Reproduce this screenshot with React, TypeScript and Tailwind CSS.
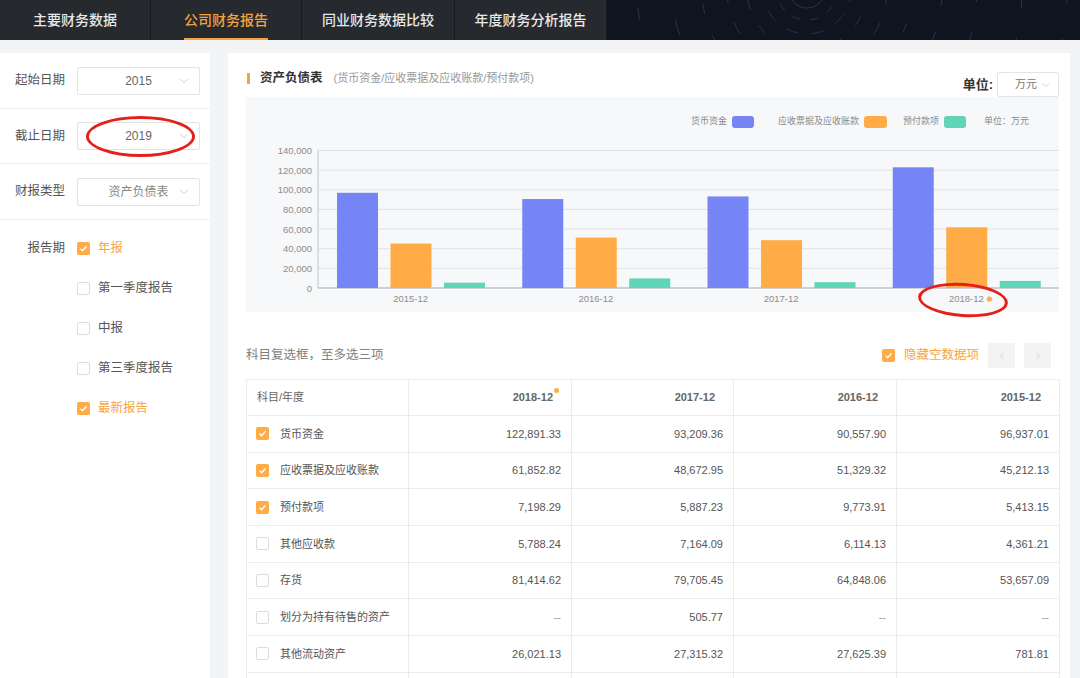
import { ChevronDown, ChevronLeft, ChevronRight } from "lucide-react";

const tabs = ["主要财务数据", "公司财务报告", "同业财务数据比较", "年度财务分析报告"];
const tabWidths = ["w-[151px]", "w-[151px]", "w-[153px]", "w-[152px]"];

const periods = [
  { label: "年报", checked: true },
  { label: "第一季度报告", checked: false },
  { label: "中报", checked: false },
  { label: "第三季度报告", checked: false },
  { label: "最新报告", checked: true },
];

const chartData = [
  { year: "2015-12", values: [96937, 45212, 5413] },
  { year: "2016-12", values: [90558, 51329, 9774] },
  { year: "2017-12", values: [93209, 48673, 5887] },
  { year: "2018-12", values: [122891, 61853, 7198] },
];

const barColors = ["#7585f6", "#ffab46", "#5fd4b6"];

const rows: [string, boolean, string, string, string, string][] = [
  ["货币资金", true, "122,891.33", "93,209.36", "90,557.90", "96,937.01"],
  ["应收票据及应收账款", true, "61,852.82", "48,672.95", "51,329.32", "45,212.13"],
  ["预付款项", true, "7,198.29", "5,887.23", "9,773.91", "5,413.15"],
  ["其他应收款", false, "5,788.24", "7,164.09", "6,114.13", "4,361.21"],
  ["存货", false, "81,414.62", "79,705.45", "64,848.06", "53,657.09"],
  ["划分为持有待售的资产", false, "--", "505.77", "--", "--"],
  ["其他流动资产", false, "26,021.13", "27,315.32", "27,625.39", "781.81"],
];

function Checkbox({ checked }: { checked: boolean }) {
  if (checked) {
    return (
      <span className="w-[13px] h-[13px] rounded-[2px] bg-[#ffab46] flex items-center justify-center shrink-0">
        <svg width="9" height="9" viewBox="0 0 9 9">
          <path d="M1.5 4.6 L3.6 6.7 L7.6 2.2" fill="none" stroke="#fff" strokeWidth="1.3" />
        </svg>
      </span>
    );
  }
  return <span className="w-[13px] h-[13px] rounded-[2px] border border-[#dcdcdc] bg-white shrink-0" />;
}

function Select({ value, light }: { value: string; light?: boolean }) {
  return (
    <div className="relative shrink-0 w-[123px] h-[28px] border border-[#e4e4e4] rounded-[2px] flex items-center justify-center">
      <span className={light ? "text-[12px] text-[#888]" : "text-[12px] text-[#666]"}>{value}</span>
      <ChevronDown size={14} strokeWidth={1} className="absolute right-[8px] text-[#aaa]" />
    </div>
  );
}

function Chart() {
  const top = 53.5;
  const bottom = 191;
  const left = 72;
  const right = 813;
  const catW = (right - left) / 4;
  const y = (v: number) => bottom - (v / 140000) * (bottom - top);
  const ticks = [140000, 120000, 100000, 80000, 60000, 40000, 20000, 0];

  return (
    <svg width="813" height="215" className="block">
      <g fontFamily="Liberation Sans, Noto Sans CJK SC, sans-serif" fontSize="9" fill="#8a8a8a">
        <text x="445" y="27">货币资金</text>
        <rect x="486" y="19" width="22" height="12" rx="3" fill={barColors[0]} />
        <text x="532" y="27">应收票据及应收账款</text>
        <rect x="618" y="19" width="23" height="12" rx="3" fill={barColors[1]} />
        <text x="657" y="27">预付款项</text>
        <rect x="698" y="19" width="22" height="12" rx="3" fill={barColors[2]} />
        <text x="738" y="27">单位：万元</text>
      </g>
      {ticks.map((t) => (
        <g key={t}>
          <line
            x1={left}
            x2={right}
            y1={y(t)}
            y2={y(t)}
            stroke={t === 0 ? "#a9a9ad" : "#e1e2e6"}
            strokeWidth="1"
          />
          <text
            x="66"
            y={y(t) + 3.5}
            textAnchor="end"
            fontFamily="Liberation Sans, sans-serif"
            fontSize="9.5"
            fill="#8d8d8d"
          >
            {t.toLocaleString("en-US")}
          </text>
        </g>
      ))}
      <line x1={left} x2={left} y1={top} y2={bottom} stroke="#c4c4c8" strokeWidth="1" />
      {chartData.map((d, i) => {
        const start = left + i * catW;
        return (
          <g key={d.year}>
            {d.values.map((v, j) => (
              <rect
                key={j}
                x={start + 19 + j * 53.5}
                y={y(v)}
                width="41"
                height={bottom - y(v)}
                fill={barColors[j]}
              />
            ))}
            <text
              x={start + catW / 2}
              y="205"
              textAnchor="middle"
              fontFamily="Liberation Sans, sans-serif"
              fontSize="9.5"
              fill="#8d8d8d"
            >
              {d.year}
            </text>
            {i === 3 && <circle cx={start + catW / 2 + 23} cy="202" r="2.6" fill="#ffab46" />}
          </g>
        );
      })}
    </svg>
  );
}

export default function App() {
  return (
    <div className="relative w-[1080px] h-[678px] overflow-hidden bg-[#f3f4f6] font-['Liberation_Sans','Noto_Sans_CJK_SC',sans-serif]">
      {/* Top nav */}
      <nav className="relative h-[40px] flex bg-[#0f1421] overflow-hidden">
        <svg className="absolute left-[607px] top-0" width="473" height="40">
          <g fill="none" stroke="#3a4a5c" strokeWidth="1" opacity="0.6">
            <circle cx="200" cy="-10" r="18" />
            <circle cx="200" cy="-10" r="30" strokeDasharray="8 10" />
            <circle cx="200" cy="-10" r="44" strokeDasharray="12 14" />
            <circle cx="200" cy="-10" r="60" strokeDasharray="10 18" />
            <circle cx="200" cy="-10" r="80" strokeDasharray="14 20" />
            <circle cx="200" cy="-10" r="105" strokeDasharray="10 24" />
            <circle cx="200" cy="-10" r="135" strokeDasharray="16 26" />
            <circle cx="200" cy="-10" r="170" strokeDasharray="12 30" />
            <circle cx="200" cy="-10" r="215" strokeDasharray="18 30" />
            <circle cx="200" cy="-10" r="260" strokeDasharray="14 34" />
          </g>
        </svg>
        {tabs.map((t, i) => (
          <div
            key={t}
            className={`relative ${tabWidths[i]} h-full flex items-center justify-center bg-[#26292e] border-r border-[#18191d]`}
          >
            <span
              className={
                i === 1
                  ? "relative h-full flex items-center text-[14px] font-medium text-[#f5a33d]"
                  : "text-[14px] font-medium text-[#e8e8e8]"
              }
            >
              {t}
              {i === 1 && <span className="absolute left-0 right-0 bottom-0 h-[2px] bg-[#f5a33d]" />}
            </span>
          </div>
        ))}
      </nav>

      <div className="flex gap-[18px] pt-[13px]">
        {/* Sidebar */}
        <aside className="w-[210px] h-[625px] bg-white flex flex-col">
          <div className="h-[56px] flex items-center pl-[15px] pr-[10px] border-b border-[#efefef]">
            <span className="w-[62px] shrink-0 text-[12.5px] text-[#555]">起始日期</span>
            <Select value="2015" />
          </div>
          <div className="h-[55px] flex items-center pl-[15px] pr-[10px] border-b border-[#efefef]">
            <span className="w-[62px] shrink-0 text-[12.5px] text-[#555]">截止日期</span>
            <Select value="2019" />
          </div>
          <div className="h-[56px] flex items-center pl-[15px] pr-[10px] border-b border-[#efefef]">
            <span className="w-[62px] shrink-0 text-[12.5px] text-[#555]">财报类型</span>
            <Select value="资产负债表" light />
          </div>
          <div className="pt-[8px] px-[15px] flex flex-col">
            {periods.map((p, i) => (
              <div key={p.label} className="h-[40px] flex items-center">
                <span className="w-[62px] shrink-0 pr-[12px] text-right text-[12.5px] text-[#555]">
                  {i === 0 ? "报告期" : ""}
                </span>
                <Checkbox checked={p.checked} />
                <span
                  className={
                    p.checked
                      ? "ml-[8px] text-[12.5px] text-[#f7a541]"
                      : "ml-[8px] text-[12.5px] text-[#555]"
                  }
                >
                  {p.label}
                </span>
              </div>
            ))}
          </div>
        </aside>

        {/* Main */}
        <main className="w-[842px] h-[625px] bg-white pl-[18px] pr-[11px] pt-[19px] overflow-hidden">
          <div className="flex justify-between items-start h-[25px]">
            <div className="flex items-center h-[12px] pl-[1px]">
              <span className="w-[3px] h-[11px] bg-[#f5a33d]" />
              <span className="ml-[10px] text-[12.5px] font-bold text-[#333]">资产负债表</span>
              <span className="ml-[11px] text-[11px] text-[#999]">(货币资金/应收票据及应收账款/预付款项)</span>
            </div>
            <div className="flex items-center h-[25px]">
              <span className="text-[13px] font-bold text-[#333]">单位:</span>
              <div className="ml-[4px] w-[62px] h-[25px] border border-[#e4e4e4] rounded-[2px] flex items-center justify-end pr-[6px] gap-[3px]">
                <span className="text-[11px] text-[#777]">万元</span>
                <ChevronDown size={12} strokeWidth={1} className="text-[#aaa]" />
              </div>
            </div>
          </div>

          <div className="bg-[#f7f8fa] h-[215px]">
            <Chart />
          </div>

          <div className="mt-[31px] h-[25px] flex items-center justify-between">
            <span className="text-[12.5px] text-[#808080]">科目复选框，至多选三项</span>
            <div className="flex items-center mr-[8px]">
              <Checkbox checked />
              <span className="ml-[9px] text-[12.5px] text-[#f7a541]">隐藏空数据项</span>
              <span className="ml-[9px] w-[27px] h-[25px] bg-[#f3f3f3] flex items-center justify-center">
                <ChevronLeft size={12} strokeWidth={1.2} className="text-[#bbb]" />
              </span>
              <span className="ml-[9px] w-[27px] h-[25px] bg-[#f3f3f3] flex items-center justify-center">
                <ChevronRight size={12} strokeWidth={1.2} className="text-[#bbb]" />
              </span>
            </div>
          </div>

          <table className="mt-[11px] w-[813px] border-collapse table-fixed">
            <colgroup>
              <col className="w-[162px]" />
              <col className="w-[163px]" />
              <col className="w-[162px]" />
              <col className="w-[163px]" />
              <col className="w-[163px]" />
            </colgroup>
            <thead>
              <tr className="h-[36px]">
                <th className="border border-[#ececee] pl-[10px] text-left text-[11px] font-normal text-[#666]">
                  科目/年度
                </th>
                {["2018-12", "2017-12", "2016-12", "2015-12"].map((y, i) => (
                  <th
                    key={y}
                    className="border border-[#ececee] pr-[18px] text-right text-[11px] font-bold text-[#666]"
                  >
                    <span className="relative">
                      {y}
                      {i === 0 && (
                        <span className="absolute -right-[6px] -top-[3px] w-[5px] h-[5px] rounded-full bg-[#ffab46]" />
                      )}
                    </span>
                  </th>
                ))}
              </tr>
            </thead>
            <tbody>
              {rows.map((r) => (
                <tr key={r[0]} className="h-[36.7px]">
                  <td className="border border-[#ececee] pl-[9px]">
                    <div className="flex items-center">
                      <Checkbox checked={r[1]} />
                      <span className="ml-[11px] text-[11px] text-[#555]">{r[0]}</span>
                    </div>
                  </td>
                  {r.slice(2).map((v, i) => (
                    <td
                      key={i}
                      className={
                        v === "--"
                          ? "border border-[#ececee] pr-[10px] text-right text-[11px] text-[#999]"
                          : "border border-[#ececee] pr-[10px] text-right text-[11px] text-[#555]"
                      }
                    >
                      {v as string}
                    </td>
                  ))}
                </tr>
              ))}
              <tr className="h-[36.7px]">
                <td className="border border-[#ececee]" />
                <td className="border border-[#ececee]" />
                <td className="border border-[#ececee]" />
                <td className="border border-[#ececee]" />
                <td className="border border-[#ececee]" />
              </tr>
            </tbody>
          </table>
        </main>
      </div>

      {/* Red annotation circles */}
      <div className="absolute left-[86px] top-[116px] w-[109px] h-[41px] rounded-[50%] border-[3px] border-[#e5201b]" />
      <div className="absolute left-[918px] top-[283px] w-[90px] h-[34px] rounded-[50%] border-[3px] border-[#e5201b] rotate-[4deg]" />
    </div>
  );
}
